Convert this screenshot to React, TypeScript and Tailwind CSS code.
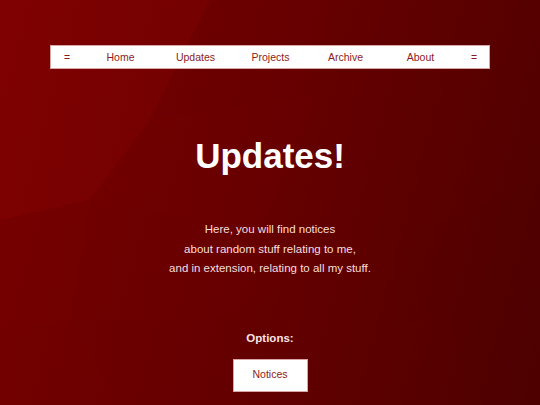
import React from 'react'

const navItems = ['=', 'Home', 'Updates', 'Projects', 'Archive', 'About', '=']

// faint low-poly facets behind the page
const facets = [
  { points: '0,0 210,0 150,120 0,90', fill: 'rgba(255,40,40,0.03)' },
  { points: '210,0 330,0 320,95 150,120', fill: 'rgba(0,0,0,0.03)' },
  { points: '330,0 540,0 540,60 420,110 320,95', fill: 'rgba(0,0,0,0.04)' },
  { points: '0,90 150,120 90,200 0,220', fill: 'rgba(255,30,30,0.03)' },
  { points: '150,120 320,95 260,230 90,200', fill: 'rgba(0,0,0,0.02)' },
  { points: '320,95 420,110 540,60 540,180 400,240 260,230', fill: 'rgba(0,0,0,0.04)' },
  { points: '0,220 90,200 70,320 0,330', fill: 'rgba(0,0,0,0.02)' },
  { points: '90,200 260,230 280,290 210,320 70,320', fill: 'rgba(0,0,0,0.03)' },
  { points: '260,230 400,240 390,330 280,290', fill: 'rgba(0,0,0,0.04)' },
  { points: '400,240 540,180 540,300 450,310 390,330', fill: 'rgba(0,0,0,0.05)' },
  { points: '0,330 70,320 120,405 0,405', fill: 'rgba(0,0,0,0.03)' },
  { points: '70,320 210,320 280,290 330,405 120,405', fill: 'rgba(0,0,0,0.04)' },
  { points: '280,290 390,330 450,310 470,405 330,405', fill: 'rgba(0,0,0,0.04)' },
  { points: '450,310 540,300 540,405 470,405', fill: 'rgba(0,0,0,0.05)' },
]

export default function App() {
  return (
    <div
      className="relative w-full h-[405px] overflow-hidden bg-[linear-gradient(105deg,#7c0000_0%,#6a0000_50%,#520000_100%)]"
      style={{ fontFamily: '"Liberation Sans", Arial, sans-serif' }}
    >
      {/* Background facets */}
      <svg className="absolute inset-0 w-full h-full" viewBox="0 0 540 405" preserveAspectRatio="none">
        {facets.map((f, i) => (
          <polygon key={i} points={f.points} fill={f.fill} />
        ))}
      </svg>

      <div className="relative flex flex-col items-center pt-[45px]">
        {/* Nav */}
        <nav className="w-[440px] h-6 bg-white border border-[#d8a6a6] grid grid-cols-[32px_repeat(5,75px)_32px] items-center">
          {navItems.map((item, i) => (
            <span key={i} className="text-center text-[10.5px] text-[#8b1b1b] leading-none">
              {item}
            </span>
          ))}
        </nav>

        <h1 className="mt-[69px] text-[35px] leading-none font-bold text-white">Updates!</h1>

        <p className="mt-[47px] text-center text-[11.5px] leading-[19.5px] text-[#f6dede]">
          Here, you will find notices
          <br />
          about random stuff relating to me,
          <br />
          and in extension, relating to all my stuff.
        </p>

        <h2 className="mt-[51px] text-[11.5px] leading-4 font-bold text-[#f6e4e4]">Options:</h2>

        <button className="mt-[13px] w-[75px] h-[33px] bg-white border border-[#d8a6a6] text-[10.5px] text-[#8b1b1b]">
          Notices
        </button>
      </div>
    </div>
  )
}
